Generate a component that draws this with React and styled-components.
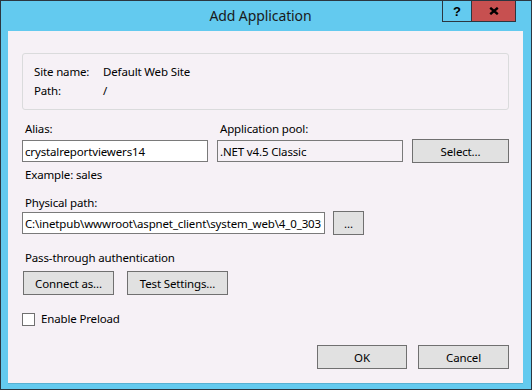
import React from "react";
import styled, { createGlobalStyle } from "styled-components";

const Global = createGlobalStyle`
  html, body { margin: 0; padding: 0; background: #ffffff; }
  * { box-sizing: border-box; }
`;

const FONT = `"Noto Sans", "Open Sans", sans-serif`;

const Window = styled.div`
  position: relative;
  width: 532px;
  height: 390px;
  border: 1px solid #2b3640;
  background: #63caef;
  display: flex;
  flex-direction: column;
  padding: 0 8px 6px 7px;
  font-family: ${FONT};
`;

const TitleBar = styled.div`
  height: 30px;
  flex: none;
  display: flex;
  align-items: center;
  justify-content: center;
  padding-right: 10px;
  padding-bottom: 1px;
  font-size: 14px;
  letter-spacing: -0.1px;
  color: #1a1a1a;
`;

const CaptionGroup = styled.div`
  position: absolute;
  top: -1px;
  right: 15px;
  display: flex;
  height: 22px;
  border: 1px solid #2b3640;
`;

const CaptionButton = styled.div`
  width: ${(p) => p.$w}px;
  height: 100%;
  display: flex;
  align-items: center;
  justify-content: center;
  background: ${(p) => p.$bg};
  border-left: ${(p) => (p.$divider ? "1px solid #2b3640" : "none")};
  font-family: "Liberation Sans", sans-serif;
  font-weight: 700;
  font-size: 13px;
  color: #000;
`;

const Client = styled.div`
  flex: 1;
  background: #f6f1f6;
  display: flex;
  flex-direction: column;
  padding: 22px 14px 14px 14px;
  font-size: 11.5px;
  letter-spacing: -0.15px;
  line-height: 16px;
  color: #000;
  box-shadow: 0 1px 0 rgba(0, 0, 0, 0.12);
`;

const InfoBox = styled.div`
  border: 1px solid #dadbdc;
  border-radius: 3px;
  padding: 8px 11px 9px 11px;
  display: grid;
  grid-template-columns: 69px auto;
  line-height: 19px;
`;

const Label = styled.div`
  line-height: 16px;
  margin-top: ${(p) => p.$mt || 0}px;
  margin-left: 3px;
`;

const FieldGrid = styled.div`
  margin-top: 11px;
  display: grid;
  grid-template-columns: 186px 186px 97px;
  column-gap: 9px;
  row-gap: 2px;
  align-items: center;
`;

const TextBox = styled.input`
  width: ${(p) => p.$w || 186}px;
  height: 22px;
  border: 1px solid #7a7a7a;
  background: ${(p) => (p.readOnly ? "#f6f1f6" : "#ffffff")};
  padding: 0 2px;
  margin: 0;
  font-family: ${FONT};
  font-size: 11.5px;
  letter-spacing: -0.15px;
  color: #000;
  outline: none;
`;

const Button = styled.button`
  width: ${(p) => p.$w}px;
  height: 24px;
  border: 1px solid #707070;
  background: #e1e1e1;
  padding: 0;
  margin: 0;
  font-family: ${FONT};
  font-size: 11.5px;
  letter-spacing: -0.15px;
  color: #000;
`;

const Row = styled.div`
  display: flex;
  align-items: center;
  gap: ${(p) => p.$gap || 0}px;
  margin-top: ${(p) => p.$mt || 0}px;
  margin-left: ${(p) => p.$ml || 0}px;
`;

const CheckBox = styled.input`
  appearance: none;
  -webkit-appearance: none;
  width: 13px;
  height: 13px;
  margin: 0;
  border: 1px solid #707070;
  background: #ffffff;
`;

const Footer = styled.div`
  margin-top: auto;
  display: flex;
  justify-content: flex-end;
  gap: 11px;
`;

function CloseGlyph() {
  return (
    <svg width="10" height="8" viewBox="0 0 10 8">
      <path d="M1.2 0.8 L8.8 7.2 M8.8 0.8 L1.2 7.2" stroke="#000" strokeWidth="2.4" />
    </svg>
  );
}

export default function App() {
  return (
    <>
      <Global />
      <Window>
        <TitleBar>Add Application</TitleBar>
        <CaptionGroup>
          <CaptionButton $w={28} $bg="#63caef">?</CaptionButton>
          <CaptionButton $w={44} $bg="#c75050" $divider>
            <CloseGlyph />
          </CaptionButton>
        </CaptionGroup>
        <Client>
          <InfoBox>
            <span>Site name:</span>
            <span>Default Web Site</span>
            <span>Path:</span>
            <span>/</span>
          </InfoBox>
          <FieldGrid>
            <Label>Alias:</Label>
            <Label>Application pool:</Label>
            <span />
            <TextBox defaultValue="crystalreportviewers14" />
            <TextBox readOnly defaultValue=".NET v4.5 Classic" />
            <Button $w={97}>Select...</Button>
          </FieldGrid>
          <Label $mt={4}>Example: sales</Label>
          <Label $mt={12}>Physical path:</Label>
          <Row $gap={8}>
            <TextBox
              $w={303}
              defaultValue="C:\inetpub\wwwroot\aspnet_client\system_web\4_0_30319"
            />
            <Button $w={31}>...</Button>
          </Row>
          <Label $mt={15}>Pass-through authentication</Label>
          <Row $gap={13} $mt={5} $ml={1}>
            <Button $w={91}>Connect as...</Button>
            <Button $w={101}>Test Settings...</Button>
          </Row>
          <Row $gap={6} $mt={16}>
            <CheckBox type="checkbox" />
            <span>Enable Preload</span>
          </Row>
          <Footer>
            <Button $w={90}>OK</Button>
            <Button $w={91}>Cancel</Button>
          </Footer>
        </Client>
      </Window>
    </>
  );
}
